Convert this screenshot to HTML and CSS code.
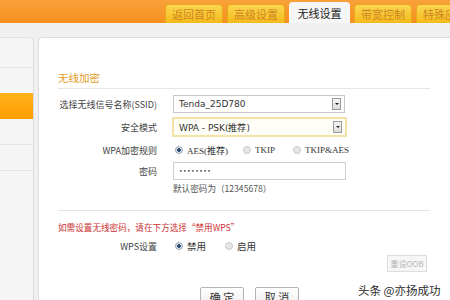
FILE: index.html
```html
<!DOCTYPE html>
<html lang="zh-CN">
<head>
  <meta charset="UTF-8">
  <title>无线设置</title>
  <link rel="stylesheet" href="styles.css">
</head>
<body>
  <div class="topbar">
    <div class="tabs">
      <span class="tab">返回首页</span>
      <span class="tab">高级设置</span>
      <span class="tab active">无线设置</span>
      <span class="tab">带宽控制</span>
      <span class="tab">特殊应用</span>
    </div>
  </div>

  <div class="page">
    <div class="sidebar">
      <div class="side-item first"></div>
      <div class="side-item plain"></div>
      <div class="side-item current"></div>
      <div class="side-item"></div>
      <div class="side-item"></div>
    </div>

    <div class="panel">
      <h3 class="title">无线加密</h3>

      <div class="form">
        <div class="row r-ssid">
          <label class="lbl">选择无线信号名称(SSID)</label>
          <div class="select">
            <span>Tenda_25D780</span>
            <i class="arrow"></i>
          </div>
        </div>
        <div class="row r-mode">
          <label class="lbl">安全模式</label>
          <div class="select focus">
            <span>WPA - PSK(推荐)</span>
            <i class="arrow"></i>
          </div>
        </div>
        <div class="row r-radio">
          <label class="lbl">WPA加密规则</label>
          <div class="radios">
            <span class="radio on">AES(推荐)</span>
            <span class="radio w-tkip">TKIP</span>
            <span class="radio">TKIP&amp;AES</span>
          </div>
        </div>
        <div class="row r-pass">
          <label class="lbl">密码</label>
          <div class="input">••••••••</div>
        </div>
        <div class="row r-hint">
          <label class="lbl"></label>
          <span class="hint">默认密码为（12345678）</span>
        </div>
      </div>

      <div class="wps">
        <p class="warn">如需设置无线密码，请在下方选择“禁用WPS”</p>
        <div class="row r-wps">
          <label class="lbl">WPS设置</label>
          <div class="radios">
            <span class="radio on w-off">禁用</span>
            <span class="radio">启用</span>
          </div>
        </div>
        <div class="oob-line">
          <button class="btn-oob" disabled>重设OOB</button>
        </div>
      </div>

      <div class="actions">
        <button class="btn">确 定</button>
        <button class="btn">取 消</button>
      </div>
    </div>
  </div>

  <div class="watermark">头条 @亦扬成功</div>
</body>
</html>
```

FILE: styles.css
```css
body {
  margin: 0;
  width: 450px;
  height: 300px;
  overflow: hidden;
  background: #f0f0f0;
  font-family: "Noto Sans CJK SC", "DejaVu Sans", sans-serif;
  color: #333;
  position: relative;
}

.topbar {
  height: 23px;
  background: linear-gradient(#f9a23a, #f6901f);
  overflow: hidden;
}

.tabs {
  display: flex;
  align-items: flex-end;
  gap: 4px;
  height: 23px;
  padding-left: 165px;
  white-space: nowrap;
}

.tab {
  flex: none;
  width: 58px;
  height: 19px;
  line-height: 19px;
  text-align: center;
  font-size: 11px;
  color: #cf8520;
  background: linear-gradient(#fbd650, #f3bb1c);
  border-radius: 4px 4px 0 0;
  box-sizing: border-box;
  border: 1px solid #eba81a;
  border-bottom: none;
}

.tab.active {
  width: 61px;
  height: 21px;
  line-height: 21px;
  color: #222;
  background: #f6f6f6;
  border-color: #f6f6f6;
}

.page {
  display: flex;
  gap: 4px;
  padding-top: 14px;
  height: 263px;
}

.sidebar {
  width: 34px;
  flex: none;
  background: #f5f5f5;
  border-right: 1px solid #dcdcdc;
  border-top: 1px solid #e2e2e2;
  border-radius: 0 4px 0 0;
  box-sizing: border-box;
}

.side-item {
  height: 25px;
  border-bottom: 1px solid #e4e4e4;
}

.side-item.first {
  height: 29px;
}

.side-item.plain {
  border-bottom: none;
}

.side-item.current {
  height: 26px;
  border-bottom: none;
  background: linear-gradient(#ffb21a, #ff9d00);
}

.panel {
  flex: 1;
  background: #fff;
  border: 1px solid #dcdcdc;
  border-right: none;
  border-bottom: none;
  border-radius: 5px 0 0 0;
  padding: 33px 20px 0 19px;
}

.title {
  margin: 0;
  font-size: 10.5px;
  font-weight: normal;
  line-height: 14px;
  color: #e29a22;
  padding-bottom: 3px;
  border-bottom: 1px solid #e6e6e6;
}

.form {
  padding-top: 6px;
}

.row {
  display: flex;
  align-items: center;
  gap: 16px;
}

.lbl {
  width: 99px;
  flex: none;
  text-align: right;
  font-size: 9px;
  color: #444;
}

.r-ssid { height: 18px; }
.r-mode { height: 20px; margin-top: 4px; }
.r-radio { height: 22px; margin-top: 2px; }
.r-pass { height: 18px; margin-top: 1px; }
.r-hint { height: 13px; margin-top: 1px; }

.select {
  width: 172px;
  height: 18px;
  box-sizing: border-box;
  border: 1px solid #c8c8c8;
  display: flex;
  align-items: center;
  padding-left: 5px;
  font-family: "DejaVu Sans", sans-serif;
  font-size: 9px;
  color: #333;
}

.select.focus {
  width: 175px;
  height: 20px;
  margin-left: -1px;
  border: 2px solid #f3e2a8;
  background: #fffef6;
}

.arrow {
  margin-left: auto;
  margin-right: 3px;
  width: 9px;
  height: 12px;
  box-sizing: border-box;
  border: 1px solid #9a9a9a;
  background: linear-gradient(#f6f6f6, #dcdcdc);
  position: relative;
}

.arrow::after {
  content: "";
  position: absolute;
  left: 2px;
  top: 4px;
  border-left: 2px solid transparent;
  border-right: 2px solid transparent;
  border-top: 2px solid #222;
}

.radios {
  display: flex;
  align-items: center;
  padding-left: 2px;
  font-size: 9px;
  font-family: "Liberation Serif", "Noto Sans CJK SC", serif;
  color: #333;
}

.radio {
  display: flex;
  align-items: center;
  gap: 4px;
  width: 68px;
}

.radio.w-tkip { width: 50px; }
.radio.w-off { width: 50px; }

.r-wps .radio {
  font-family: "Noto Sans CJK SC", sans-serif;
  font-size: 9.5px;
}

.radio::before {
  content: "";
  width: 8px;
  height: 8px;
  box-sizing: border-box;
  border-radius: 50%;
  border: 1px solid #c8c8c8;
  background: #e6e6e6;
}

.radio.on::before {
  border-color: #9aa4ae;
  background: radial-gradient(circle, #2d4d72 0 1.6px, #dfe6ee 2px);
}

.input {
  width: 173px;
  height: 18px;
  box-sizing: border-box;
  border: 1px solid #cfcfcf;
  padding-left: 5px;
  font-size: 6px;
  line-height: 15px;
  letter-spacing: 0.5px;
  color: #444;
  font-family: "DejaVu Sans", sans-serif;
}

.hint {
  font-size: 8.6px;
  color: #555;
}

.wps {
  margin-top: 16px;
  border-top: 1px solid #e3e3e3;
  padding-top: 10px;
}

.warn {
  margin: 0;
  font-size: 8.6px;
  line-height: 13px;
  color: #cc3333;
}

.r-wps {
  height: 18px;
  margin-top: 3px;
}

.oob-line {
  display: flex;
  justify-content: flex-end;
  padding-right: 3px;
}

.btn-oob {
  width: 40px;
  height: 17px;
  padding: 0;
  border: 1px solid #dedede;
  background: #f6f6f6;
  color: #b5b5b5;
  font-family: "Noto Sans CJK SC", sans-serif;
  font-size: 8px;
}

.actions {
  display: flex;
  justify-content: center;
  gap: 11px;
  padding-left: 11px;
  margin-top: 15px;
}

.btn {
  width: 44px;
  height: 20px;
  padding: 0;
  border: 1px solid #b4b4b4;
  border-radius: 2px;
  background: linear-gradient(#ffffff, #ececec);
  color: #333;
  font-family: "Noto Sans CJK SC", sans-serif;
  font-size: 11px;
}

.watermark {
  position: absolute;
  left: 358px;
  top: 281px;
  white-space: nowrap;
  font-size: 11.5px;
  line-height: 18px;
  color: #2a2a2a;
  text-shadow: 0 0 2px #fff, 0 0 2px #fff;
}
```
